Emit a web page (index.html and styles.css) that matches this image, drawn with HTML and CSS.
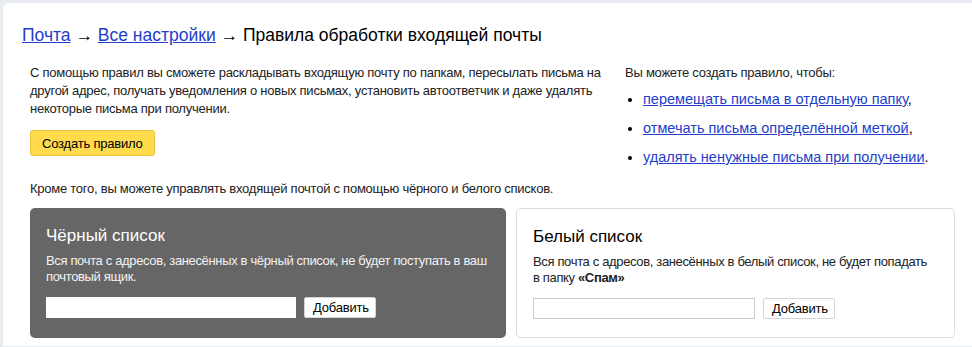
FILE: index.html
```html
<!DOCTYPE html>
<html lang="ru">
  <head>
    <meta charset="utf-8">
    <meta name="viewport" content="width=device-width, initial-scale=1">
    <title>Правила обработки входящей почты</title>
    <link rel="stylesheet" href="styles.css">
  </head>
  <body>
  <div id="page">
    <h1 id="crumbs"><a href="#">Почта</a> → <a href="#">Все настройки</a> → Правила обработки входящей почты</h1>
    <div id="intro">
      <div class="about">
        <p>С помощью правил вы сможете раскладывать входящую почту по папкам, пересылать письма на другой адрес, получать уведомления о новых письмах, установить автоответчик и даже удалять некоторые письма при получении.</p>
        <button class="create">Создать правило</button>
      </div>
      <div class="ideas">
        <p>Вы можете создать правило, чтобы:</p>
        <ul>
          <li><a href="#">перемещать письма в отдельную папку</a>,</li>
          <li><a href="#">отмечать письма определённой меткой</a>,</li>
          <li><a href="#">удалять ненужные письма при получении</a>.</li>
        </ul>
      </div>
    </div>
    <p class="lists-note">Кроме того, вы можете управлять входящей почтой с помощью чёрного и белого списков.</p>
    <div id="lists">
      <div class="list black">
        <h2>Чёрный список</h2>
        <p>Вся почта с адресов, занесённых в чёрный список, не будет поступать в ваш почтовый ящик.</p>
        <div class="add"><input type="text"><button>Добавить</button></div>
      </div>
      <div class="list white">
        <h2>Белый список</h2>
        <p>Вся почта с адресов, занесённых в белый список, не будет попадать в папку <b>«Спам»</b></p>
        <div class="add"><input type="text"><button>Добавить</button></div>
      </div>
    </div>
  </div>
  </body>
</html>
```

FILE: styles.css
```css
html, body {
  margin: 0;
  padding: 0;
  background: #e9edf1;
  font-family: Arial, "Liberation Sans", sans-serif;
  color: #000;
}

body {
  padding: 3px 0 0 3px;
}

a {
  color: #2340c8;
}

#page {
  background: #fff;
  border-radius: 6px 0 0 0;
  padding: 22px 17px 8px 19px;
  min-height: 340px;
  box-sizing: border-box;
}

#crumbs {
  font-size: 17.5px;
  font-weight: normal;
  margin: 0 0 19px 0;
  line-height: 20px;
}

#intro {
  display: flex;
  padding-left: 8px;
}

.about {
  width: 580px;
}

.about p {
  font-size: 13px;
  line-height: 18px;
  letter-spacing: -0.25px;
  margin: 0 0 12px 0;
  color: #222;
}

.create {
  font-family: inherit;
  font-size: 13px;
  letter-spacing: -0.2px;
  background: #ffdb4d;
  border: 1px solid #e6c13a;
  border-radius: 3px;
  height: 26px;
  padding: 0 11px;
  color: #000;
}

.ideas {
  margin-left: 15px;
}

.ideas p {
  font-size: 13px;
  line-height: 18px;
  letter-spacing: -0.25px;
  margin: 0 0 8px 0;
  color: #222;
}

.ideas ul {
  margin: 0;
  padding-left: 18px;
}

.ideas li {
  font-size: 14.5px;
  line-height: 18px;
  margin-bottom: 11px;
}

.lists-note {
  font-size: 13px;
  line-height: 18px;
  letter-spacing: -0.25px;
  color: #222;
  margin: 3px 0 10px 8px;
}

#lists {
  display: flex;
  gap: 10px;
  padding-left: 8px;
}

.list {
  border-radius: 5px;
  height: 130px;
  box-sizing: border-box;
  padding: 18px 14px 0 16px;
  flex: none;
}

.list h2 {
  font-size: 17px;
  font-weight: normal;
  margin: 0 0 7px 0;
  line-height: 20px;
}

.list p {
  font-size: 13px;
  line-height: 16px;
  letter-spacing: -0.35px;
  margin: 0 0 12px 0;
}

.black {
  width: 476px;
  background: #666;
  color: #fff;
}

.black p {
  color: #f2f2f2;
}

.white {
  width: 439px;
  border: 1px solid #dcdcdc;
  padding-right: 24px;
}

.white p {
  color: #222;
}

.add {
  display: flex;
  gap: 8px;
}

.add input {
  height: 21px;
  box-sizing: border-box;
  border: 1px solid #ccc;
  margin: 0;
  padding: 0 4px;
}

.black input {
  width: 250px;
  border-color: #fff;
}

.white input {
  width: 222px;
}

.add button {
  font-family: inherit;
  font-size: 13px;
  letter-spacing: -0.2px;
  height: 21px;
  padding: 0 8px;
  background: #fff;
  border: 1px solid #d5d5d5;
  border-radius: 2px;
  color: #000;
  width: 72px;
}
```
